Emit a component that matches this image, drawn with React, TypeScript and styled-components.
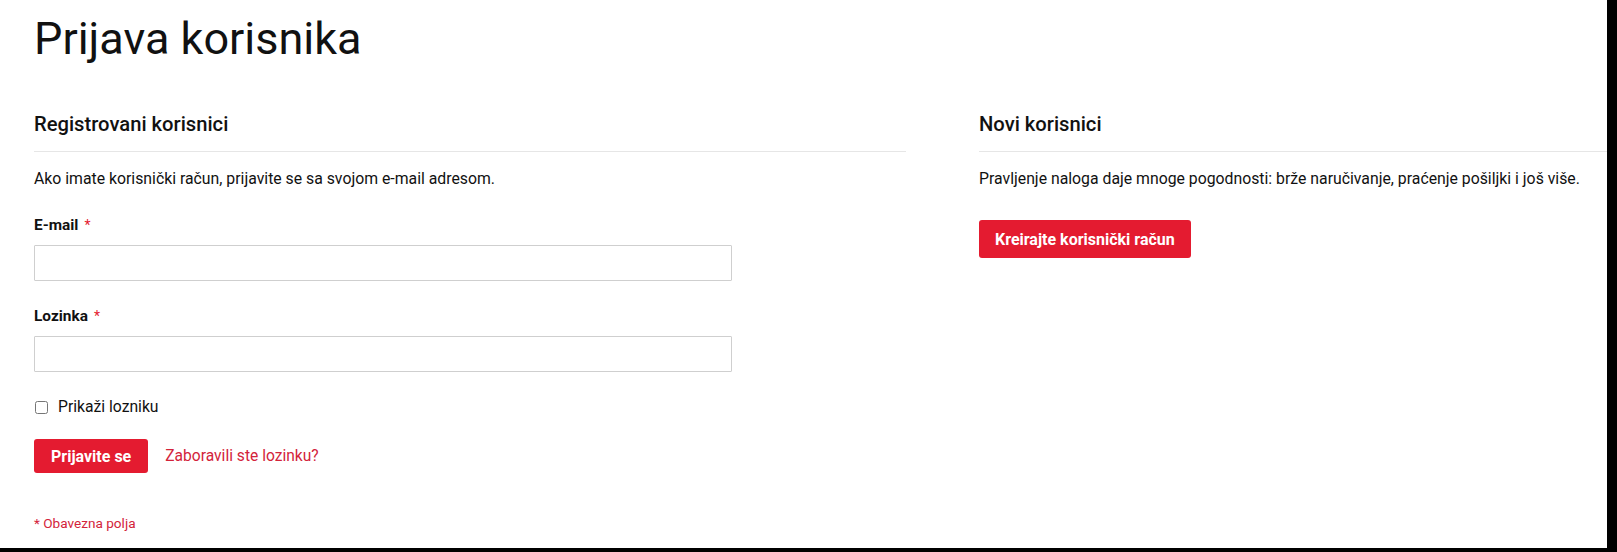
import React from "react";
import styled, { createGlobalStyle } from "styled-components";

const Global = createGlobalStyle`
  html, body {
    margin: 0;
    padding: 0;
    background: #000;
  }
  body {
    font-family: Roboto, "Noto Sans", sans-serif;
    color: #111;
  }
`;

const Page = styled.div`
  width: 1607px;
  height: 548px;
  background: #fff;
  overflow: hidden;
  padding: 12px 0 0 34px;
  box-sizing: border-box;
`;

const Title = styled.h1`
  margin: 0 0 46px;
  font-size: 45px;
  line-height: 54px;
  font-weight: 400;
  color: #111;
`;

const Columns = styled.div`
  display: grid;
  grid-template-columns: 872px 872px;
  column-gap: 73px;
  align-items: start;
`;

const Column = styled.section`
  display: flex;
  flex-direction: column;
  align-items: flex-start;
`;

const BlockTitle = styled.h2`
  align-self: stretch;
  margin: 0;
  padding-bottom: 15px;
  border-bottom: 1px solid #e6e6e6;
  font-size: 20.2px;
  line-height: 24px;
  font-weight: 500;
  color: #111;
`;

const Text = styled.p`
  margin: 17px 0 0;
  font-size: 15.8px;
  line-height: 20px;
  color: #111;
`;

const Field = styled.div<{ $first?: boolean }>`
  display: flex;
  flex-direction: column;
  width: 80%;
  margin-top: ${(p) => (p.$first ? "26px" : "25px")};
`;

const Label = styled.label`
  font-size: 15.4px;
  line-height: 20px;
  font-weight: 700;
  color: #111;
  margin-bottom: 10px;

  &::after {
    content: "*";
    color: #e41b30;
    font-weight: 400;
    margin-left: 6px;
    font-size: 14px;
  }
`;

const Input = styled.input`
  height: 36px;
  box-sizing: border-box;
  border: 1px solid #cfcfcf;
  border-radius: 1px;
  padding: 0 10px;
  font: inherit;
  outline: none;
`;

const CheckRow = styled.label`
  display: flex;
  align-items: center;
  gap: 10px;
  margin-top: 25px;
  font-size: 15.7px;
  line-height: 20px;
  color: #111;

  input {
    margin: 0 0 0 1px;
    width: 13px;
    height: 13px;
  }
`;

const Actions = styled.div`
  display: flex;
  align-items: center;
  gap: 17px;
  margin-top: 22px;
`;

const Button = styled.button<{ $tall?: boolean }>`
  background: #e41b30;
  color: #fff;
  border: none;
  border-radius: 3px;
  font-family: Roboto, sans-serif;
  font-size: 16px;
  font-weight: 700;
  height: ${(p) => (p.$tall ? "38px" : "34px")};
  padding: 0 ${(p) => (p.$tall ? "16px" : "17px")};
  margin-top: ${(p) => (p.$tall ? "31px" : "0")};
  cursor: pointer;
`;

const Link = styled.a`
  color: #d3233a;
  font-size: 15.6px;
  text-decoration: none;
`;

const Note = styled.p`
  margin: 41px 0 0;
  font-size: 13.6px;
  line-height: 18px;
  color: #d3233a;
`;

export default function App() {
  return (
    <>
      <Global />
      <Page>
        <Title>Prijava korisnika</Title>
        <Columns>
          <Column>
            <BlockTitle>Registrovani korisnici</BlockTitle>
            <Text>Ako imate korisnički račun, prijavite se sa svojom e-mail adresom.</Text>
            <Field $first>
              <Label htmlFor="email">E-mail</Label>
              <Input id="email" type="email" />
            </Field>
            <Field>
              <Label htmlFor="pass">Lozinka</Label>
              <Input id="pass" type="password" />
            </Field>
            <CheckRow>
              <input type="checkbox" />
              Prikaži lozniku
            </CheckRow>
            <Actions>
              <Button>Prijavite se</Button>
              <Link href="#">Zaboravili ste lozinku?</Link>
            </Actions>
            <Note>* Obavezna polja</Note>
          </Column>
          <Column>
            <BlockTitle>Novi korisnici</BlockTitle>
            <Text>
              Pravljenje naloga daje mnoge pogodnosti: brže naručivanje, praćenje pošiljki i još više.
            </Text>
            <Button $tall>Kreirajte korisnički račun</Button>
          </Column>
        </Columns>
      </Page>
    </>
  );
}
